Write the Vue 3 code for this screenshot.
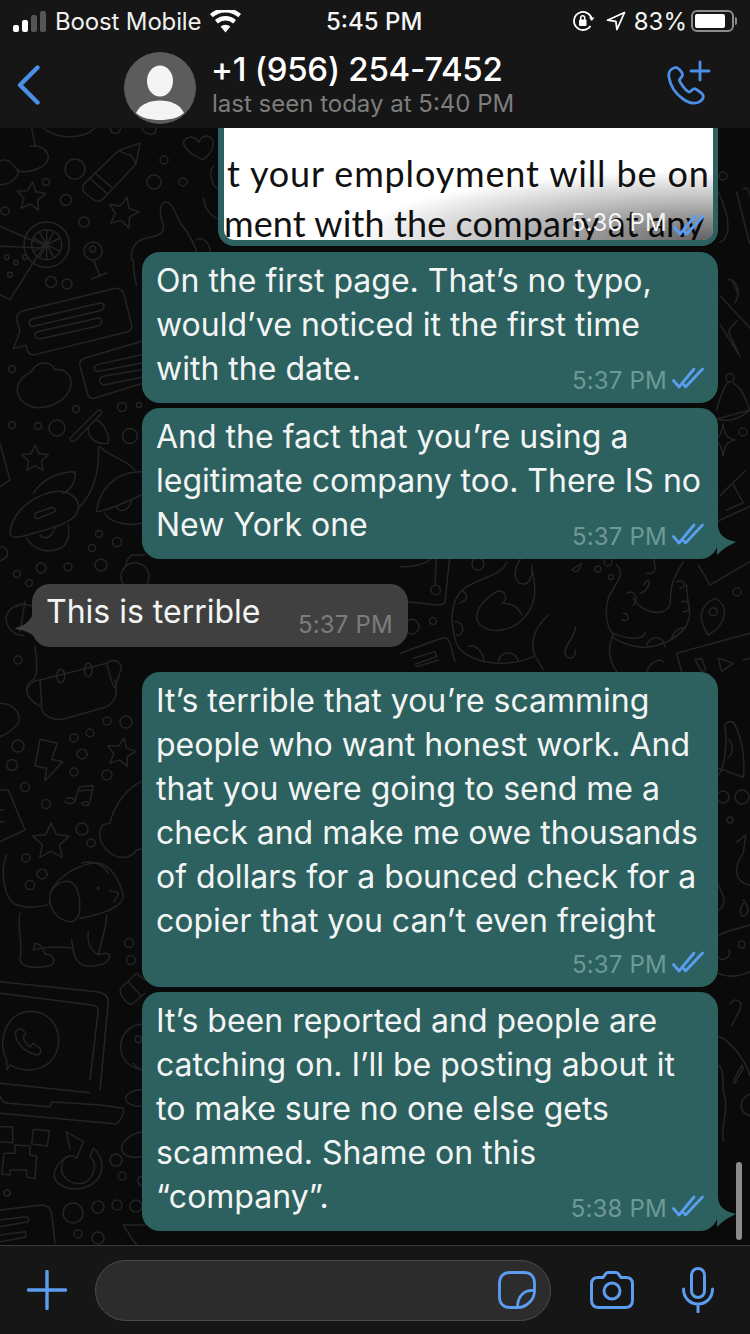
<template>
  <div class="phone">
    <header class="top">
      <div class="status">
        <div class="status-left">
          <div class="signal">
            <i class="on h1"></i><i class="on h2"></i><i class="h3"></i><i class="h4"></i>
          </div>
          <span class="carrier">Boost Mobile</span>
          <svg class="wifi" width="31" height="23" viewBox="0 0 31 23">
            <path d="M15.5 22.5 10.6 16.6a7.6 7.6 0 0 1 9.8 0ZM7.8 13.4 5 10a16 16 0 0 1 21 0l-2.8 3.4a11.6 11.6 0 0 0-15.4 0ZM2.7 7.3 0 4a23.4 23.4 0 0 1 31 0l-2.7 3.3a19.4 19.4 0 0 0-25.6 0Z" fill="#fff"/>
          </svg>
        </div>
        <span class="clock">5:45 PM</span>
        <div class="status-right">
          <svg width="24" height="24" viewBox="0 0 24 24" fill="none" stroke="#fff" stroke-width="1.8">
            <path d="M19.5 17A9 9 0 1 1 20.8 10"/>
            <path d="M18 8.5h5.500L20.800 12Z" fill="#fff" stroke="none"/>
            <rect x="8" y="10.500" width="7.500" height="6.500" rx="1" fill="#fff" stroke="none"/>
            <path d="M9.700 11V8.700a2 2 0 0 1 4 0V11" stroke-width="1.500"/>
          </svg>
          <svg class="arrow" width="20" height="20" viewBox="0 0 20 20" fill="none" stroke="#fff" stroke-width="1.800" stroke-linejoin="round">
            <path d="M18.500 1.500 1.500 9.200 9.800 10.300 11 18.500Z"/>
          </svg>
          <span class="percent">83%</span>
          <div class="battery"><div class="level"></div></div>
          <div class="nub"></div>
        </div>
      </div>
      <div class="nav">
        <svg class="back" width="24" height="40" viewBox="0 0 24 40" fill="none" stroke="#4b8fe6" stroke-width="4.400" stroke-linecap="round" stroke-linejoin="round">
          <path d="M20.500 2.500 3 20l17.500 17.500"/>
        </svg>
        <svg class="avatar" width="72" height="72" viewBox="0 0 72 72">
          <defs>
            <clipPath id="av"><circle cx="36" cy="36" r="36"/></clipPath>
          </defs>
          <g clip-path="url(#av)">
            <rect width="72" height="72" fill="#5c5c5c"/>
            <ellipse cx="36" cy="29" rx="13" ry="15.500" fill="#f4f4f4"/>
            <path d="M12 61C16 52 26 48.500 36 48.500S56 52 60 61C54 66 46 68 36 68S18 66 12 61Z" fill="#f4f4f4"/>
          </g>
        </svg>
        <div class="who">
          <div class="name">+1 (956) 254-7452</div>
          <div class="seen">last seen today at 5:40 PM</div>
        </div>
        <svg class="call" width="46" height="46" viewBox="0 0 46 46" fill="none" stroke="#4b8fe6" stroke-width="2.800" stroke-linecap="round" stroke-linejoin="round">
          <path d="M9 7.500C5 8.500 2 12 3 17.500 4.500 26 10 34 17 39c5 3.500 11 5 15 3.500 4-1.500 6-5 5-7.500-.5-1.200-6-5.500-8-6.200-2-.6-4 2.800-5.500 3.200C21 32.500 13.500 22.500 13.500 20c0-1.500 3.200-3 3-5.500C16 11.500 12 7 9 7.500Z"/>
          <path d="M34 2v18M25 11h18"/>
        </svg>
      </div>
    </header>

    <main class="chat">
      <svg class="doodles" viewBox="0 128 750 1117" fill="none" stroke="#242424" stroke-width="1.500" stroke-linecap="round" stroke-linejoin="round">
        <circle v-for="c in circles" :key="c.join()" :cx="c[0]" :cy="c[1]" :r="c[2]"/>
        <polygon v-for="s in stars" :key="s" :points="s"/>
        <path d="M723 424C725 436 727 438 735 440 727 442 725 444 723 456 721 444 719 442 711 440 719 438 721 436 723 424Z"/>

        <g transform="translate(0 128) scale(.3333)" stroke-width="4.500">
          <path d="M0 100C30 85 45 120 55 130 90 135 140 120 145 90 145 65 120 50 90 55M0 170C30 170 55 150 55 125M95 0 105 50"/>
          <path d="M420 45 355 68 250 170Q245 185 255 195L285 218Q297 224 310 212L408 108ZM355 68C372 72 385 85 392 80 400 95 405 100 408 108M268 150 320 195M285 135 335 178"/>
          <path d="M610 95C570 80 540 50 555 35 570 20 590 30 597 42 605 20 635 15 640 45 640 65 625 85 610 95Z"/>
          <circle cx="140" cy="350" r="68"/>
          <circle cx="140" cy="350" r="45"/>
          <path d="M140 305V395M100 330 180 370M100 370 180 330M118 312 162 388M162 312 118 388"/>
          <path d="M0 295 133 352 30 515 0 500M0 355 133 360"/>
          <circle cx="20" cy="388" r="7"/><circle cx="48" cy="403" r="7"/><circle cx="75" cy="388" r="7"/><circle cx="30" cy="440" r="7"/>
          <path d="M280 395 300 445M275 453 320 435"/>
          <circle cx="278" cy="363" r="9"/>
          <path d="M65 550 340 482Q365 476 372 500L395 590Q398 608 380 612L105 680Q88 682 82 668L78 652 40 662 60 610 50 575Q48 556 65 550Z"/>
          <path d="M100 572 300 525Q312 525 312 535 312 545 300 548L100 595Q88 597 88 583 88 575 100 572ZM118 610 295 570Q306 572 305 583 303 592 293 594L118 633Q104 632 105 620 106 612 118 610Z"/>
          <path d="M425 640 255 690Q235 697 240 715L262 795Q268 815 285 810L430 765M425 680 292 710Q280 715 283 725 287 732 297 730L425 705M425 725 310 745Q297 750 300 762 305 772 315 770L425 748"/>
          <path d="M95 730C110 700 150 695 165 725 195 720 218 745 212 775 205 805 175 830 130 838 90 845 55 820 52 790 50 760 70 745 95 730Z"/>
          <path d="M395 395C390 360 410 335 440 330 470 325 495 320 490 290 475 250 480 225 498 222 520 225 525 260 545 290 565 315 580 340 590 370M590 335C610 325 630 345 630 372M400 395C400 420 400 440 410 470"/>
          <path d="M130 0C170 35 250 35 285 0M330 0C335 20 355 25 362 0M425 0C435 20 470 30 468 0M640 115C625 130 635 170 650 180M610 210C615 245 635 265 650 272"/>
        </g>

        <g transform="translate(0 400) scale(.3333)" stroke-width="4.500">
          <path d="M30 400C35 340 90 290 160 275 200 270 240 290 235 325 230 370 150 385 100 400 70 410 35 420 30 400Z"/>
          <path d="M100 280C125 240 170 215 225 215 230 245 210 270 190 280M105 340 155 322Q168 325 165 335L112 356Q100 355 105 340Z"/>
          <path d="M80 415C100 450 150 465 190 440 205 425 210 395 205 375M120 405C130 420 155 415 165 385"/>
          <path d="M290 335C295 275 340 215 425 215M292 335C330 330 380 305 425 285M315 340C325 365 380 380 425 370M350 320C355 335 385 340 395 300"/>
          <path d="M235 325C270 290 300 230 295 140M300 140C330 170 380 180 405 210M210 115 295 30Q305 28 305 40L225 122Q212 128 210 115ZM265 80C260 110 285 135 325 130 330 110 310 60 285 60"/>
          <path d="M0 130 30 240 0 260M0 440C25 440 35 470 0 482"/>
          <path d="M395 465C370 485 385 495 370 510M435 465H395"/>
          <circle cx="405" cy="530" r="42"/>
          <path d="M100 620C60 600 25 625 18 650 15 680 45 710 70 705M75 605 60 695M50 620 65 610"/>
          <path d="M105 740C110 780 115 820 100 840 85 845 80 860 80 870M120 840 320 790C335 775 355 780 365 800L345 865M320 790C325 810 335 850 345 865"/>
          <ellipse cx="182" cy="828" rx="12" ry="20"/><ellipse cx="265" cy="810" rx="12" ry="20"/>
        </g>

        <g transform="translate(0 680) scale(.3333)" stroke-width="4.500">
          <path d="M80 30C85 10 110 0 115 0M80 30C80 55 110 75 125 80 125 110 165 125 200 115L320 80C345 70 355 40 345 0M120 0 125 75"/>
          <path d="M0 70C40 70 65 100 55 130 40 150 15 165 0 170"/>
          <path d="M120 178 105 258 140 265 135 302 188 245 155 238 172 190Z"/>
          <path d="M200 355Q220 348 225 365 210 378 195 365M225 362 238 320 280 317 270 365M238 332 278 330M245 370Q262 360 268 372 255 382 245 372Z"/>
          <path d="M0 330H25L75 450 0 485M0 390H12M0 425H12"/>
          <path d="M435 300C380 320 340 380 330 430 290 430 290 480 320 510 350 540 390 540 410 510L435 505"/>
          <path d="M20 525C0 570 10 640 40 670 80 690 130 680 150 670M150 640C170 590 240 550 290 548 330 550 360 600 370 650 365 680 320 700 240 715"/>
          <path d="M150 640C145 680 165 720 210 725 245 725 245 670 230 625 215 595 175 595 150 640ZM245 550C270 540 310 550 325 580M330 630C335 640 355 630 355 640 355 650 345 660 340 665"/>
          <circle cx="295" cy="625" r="3"/>
          <path d="M60 700C50 740 70 790 60 840 65 860 100 865 130 860 165 860 170 840 150 825L135 822C125 790 110 790 105 790L100 810C130 800 200 800 215 805M215 780C220 810 220 835 240 850 260 865 320 860 330 830 325 815 305 820 295 825 270 810 260 790 265 755M320 705C320 740 305 780 295 822"/>
          <path d="M0 905 290 935Q325 940 325 965L300 1230M0 940 275 975Q295 980 295 990L270 1200"/>
          <path d="M20 1140C-10 1080 20 1000 88 994 150 994 176 1040 176 1082 176 1130 140 1170 88 1170 65 1170 45 1165 30 1155L20 1170Z"/>
          <path d="M50 1050C40 1060 50 1110 110 1125 120 1125 125 1115 120 1105L100 1090 90 1100C80 1095 70 1080 70 1070L78 1060 65 1048Q55 1045 50 1050Z"/>
          <path d="M362 925 410 880 435 900M362 925C355 945 385 980 400 970L435 940M385 905 425 950"/>
          <circle cx="430" cy="1100" r="68"/>
          <circle cx="415" cy="1078" r="10"/>
          <path d="M400 1150Q420 1175 435 1170"/>
        </g>

        <g transform="translate(0 1000) scale(.3333)" stroke-width="4.500">
          <path d="M0 250 270 278M0 288 5 300Q10 308 25 310L150 320 155 305 300 315 370 325Q375 345 350 372L0 340"/>
          <path d="M0 380H38V428L0 425M100 388 148 392 142 438 95 432ZM12 460H45V435L90 438V465L110 468 105 535 80 532V510H30V525L5 522Z"/>
          <path d="M205 470C165 490 150 530 175 550 215 580 290 570 305 510 310 480 295 455 280 445L270 470C290 485 290 530 250 550 210 555 170 530 190 480 195 470 215 460 230 475L250 425 198 395 210 445"/>
          <path d="M0 630 125 615Q150 615 155 640L165 730M0 660 80 650Q90 655 85 665L0 680M0 705 75 695Q80 700 75 712L0 725"/>
          <path d="M430 270C400 265 370 285 380 305 395 320 420 320 432 318M430 395C380 400 355 440 370 460 390 480 420 470 430 470M430 530C410 525 405 550 430 560M370 675H435M370 675C385 700 400 725 410 735"/>
        </g>

        <g transform="translate(400 555) scale(.3333)" stroke-width="4.500">
          <path d="M0 35C50 35 90 25 100 0M110 0 105 90M150 0 135 140Q130 150 115 150L20 140M0 295 125 250Q145 245 150 265L165 320M40 310 105 290 110 305 45 328M50 335 115 315"/>
          <circle cx="107" cy="105" r="14"/>
          <circle cx="35" cy="215" r="22"/>
          <path d="M320 20C310 60 250 65 200 95 150 130 150 190 165 250 170 290 220 320 290 325 340 325 380 315 400 305"/>
          <path d="M190 110C205 120 205 135 178 145M165 200C195 200 195 245 170 240M205 275C230 265 255 300 250 320M295 320C300 285 350 285 355 320"/>
          <path d="M395 40C410 100 410 150 370 190 340 225 280 240 240 210 215 180 240 140 290 110 320 100 325 140 305 145 320 145 350 145 365 180M370 0C345 30 335 70 360 85 390 95 400 60 395 30"/>
          <path d="M445 180C405 215 380 270 415 320L430 345M527 215C520 260 490 270 495 295 500 315 530 315 525 285M515 45 545 25Q535 60 515 45Z"/>
          <path d="M650 30C680 60 640 90 625 130 605 200 640 240 640 240 620 280 630 320 650 350M740 55C780 60 760 20 760 0M700 130C720 170 790 190 810 150 815 120 800 100 850 20"/>
          <path d="M860 90C860 150 880 170 860 210 830 260 750 290 690 270 660 260 630 250 640 235 700 260 740 250 735 230M730 90C760 50 750 110 720 115M680 115C700 100 720 130 700 150M670 175C690 175 690 205 665 195M740 270C750 240 790 240 795 275M815 250C830 210 860 220 855 220M830 80C860 70 860 100 840 100M845 140C875 130 875 175 850 170"/>
          <path d="M945 130C900 150 890 190 925 240 980 210 990 150 945 130Z"/>
          <circle cx="940" cy="170" r="12"/>
          <path d="M895 30 930 90 1050 20M830 295 1050 235M830 295 845 350M885 315 905 350 918 345 905 310ZM955 310 1000 325 965 350ZM1030 315 1050 310M740 350C750 320 780 310 790 320"/>
        </g>

        <g transform="translate(700 128) scale(.3333 .357)" stroke-width="4.500">
          <path d="M55 180C100 270 85 310 60 320M110 180 145 310Q150 335 175 340M130 170C150 160 150 200 160 215"/>
          <path d="M85 425C100 420 130 450 105 490M60 470 150 560M60 550 120 640 85 570 110 540M95 425 115 465"/>
          <path d="M50 790C70 720 85 710 90 712M100 715C130 730 140 770 150 790L50 815Q100 830 150 790"/>
          <circle cx="90" cy="700" r="12"/>
          <path d="M60 1030 135 960M100 1000 130 1050 80 1070M10 1120 150 1060"/>
        </g>

        <g transform="translate(690 680) scale(.3333 .36)" stroke-width="4.500">
          <path d="M85 265C110 230 110 160 105 130 100 115 130 110 135 125 160 170 165 230 160 270L85 245M115 165C130 175 130 205 115 215"/>
          <path d="M140 450C175 430 170 410 160 480 130 520 130 560 180 570M160 620C145 640 150 660 165 655 180 640 175 630 160 610"/>
          <path d="M85 710C120 690 160 690 180 680M85 815C120 830 160 820 180 810M85 770C100 790 130 760 115 750M85 570C100 600 115 620 85 640"/>
          <circle cx="155" cy="735" r="10"/>
          <path d="M120 900C135 880 160 890 150 915L125 960M130 1115 155 1070 160 1078 135 1120ZM85 990C120 1000 170 1060 180 1100M85 1070C110 1090 90 1130 105 1160 115 1200 90 1250 100 1280M180 1150C150 1160 140 1200 180 1210"/>
        </g>
      </svg>

      <div class="scrollbar"></div>

      <div class="messages">
        <div class="photo-bubble">
          <div class="photo">
            <div class="photo-line first">t your employment will be on</div>
            <div class="photo-line second">ment with the company at any t</div>
            <div class="shade"></div>
            <span class="time light">5:36 PM</span>
            <svg class="ticks" width="32" height="22" viewBox="0 0 32 22" fill="none" stroke="#5b9df0" stroke-width="2.800" stroke-linecap="round" stroke-linejoin="round">
              <path d="M1.500 13.500 7 20 22 2M12 18l1.500 2L30.500 2"/>
            </svg>
          </div>
        </div>

        <div v-for="m in messages" :key="m.id" class="bubble" :class="[m.side, { wide: m.extra }]">
          <div v-for="line in m.lines" :key="line" class="line">{{ line }}</div>
          <span class="time">{{ m.time }}</span>
          <svg v-if="m.side === 'out'" class="ticks" width="32" height="22" viewBox="0 0 32 22" fill="none" stroke="#5b9df0" stroke-width="2.800" stroke-linecap="round" stroke-linejoin="round">
            <path d="M1.500 13.500 7 20 22 2M12 18l1.500 2L30.500 2"/>
          </svg>
          <svg v-if="m.tail && m.side === 'out'" class="tail-out" width="20" height="32" viewBox="0 0 20 32">
            <path d="M0 0H1C1.500 9 6 14 18 16.500 19 17 18.500 17.500 18 17.500 12 20 6 24 1 29L0 30Z" fill="#2c615f"/>
          </svg>
          <svg v-if="m.tail && m.side === 'in'" class="tail-in" width="20" height="30" viewBox="0 0 20 30">
            <path d="M20 0H19C18.500 8 12 16 2 18.500 0 19 0 20 2 20.500 8 20.500 14 23 20 28Z" fill="#404040"/>
          </svg>
        </div>
      </div>
    </main>

    <footer class="bottom">
      <svg class="plus" width="40" height="40" viewBox="0 0 40 40" stroke="#5b9df0" stroke-width="3.400" stroke-linecap="round">
        <path d="M20 1.500v37M1.500 20h37"/>
      </svg>
      <div class="input">
        <svg width="38" height="38" viewBox="0 0 38 38" fill="none" stroke="#5b9df0" stroke-width="2.800" stroke-linejoin="round">
          <path d="M12 1.500H26C32.500 1.500 36.500 5.500 36.500 12V20C36.500 29 28 36.500 20 36.500H12C5.500 36.500 1.500 32.500 1.500 26V12C1.500 5.500 5.500 1.500 12 1.500Z"/>
          <path d="M36.500 19.500C27 18.500 19.500 24 19.500 36.500"/>
        </svg>
      </div>
      <svg class="camera" width="44" height="38" viewBox="0 0 44 38" fill="none" stroke="#5b9df0" stroke-width="3">
        <path d="M8 6.500H13L16 2.500Q16.500 1.500 18 1.500H26Q27.500 1.500 28 2.500L31 6.500H36Q42.500 6.500 42.500 13V29Q42.500 36.500 35 36.500H9Q1.500 36.500 1.500 29V13Q1.500 6.500 8 6.500Z"/>
        <circle cx="22" cy="20" r="8"/>
      </svg>
      <svg class="mic" width="32" height="46" viewBox="0 0 32 46" fill="none" stroke="#5b9df0" stroke-width="3" stroke-linecap="round">
        <rect x="9.500" y="1.500" width="13" height="29" rx="6.500"/>
        <path d="M1.500 22C1.500 31 8 37 16 37S30.500 31 30.500 22M16 37V45"/>
      </svg>
    </footer>
  </div>
</template>

<script setup>
const messages = [
  {
    id: 1,
    side: 'out',
    time: '5:37 PM',
    lines: ['On the first page. That’s no typo,', 'would’ve noticed it the first time', 'with the date.'],
  },
  {
    id: 2,
    side: 'out',
    time: '5:37 PM',
    tail: true,
    lines: ['And the fact that you’re using a', 'legitimate company too. There IS no', 'New York one'],
  },
  {
    id: 3,
    side: 'in',
    time: '5:37 PM',
    tail: true,
    lines: ['This is terrible'],
  },
  {
    id: 4,
    side: 'out',
    time: '5:37 PM',
    extra: true,
    lines: [
      'It’s terrible that you’re scamming',
      'people who want honest work. And',
      'that you were going to send me a',
      'check and make me owe thousands',
      'of dollars for a bounced check for a',
      'copier that you can’t even freight',
    ],
  },
  {
    id: 5,
    side: 'out',
    time: '5:38 PM',
    tail: true,
    lines: [
      'It’s been reported and people are',
      'catching on. I’ll be posting about it',
      'to make sure no one else gets',
      'scammed. Shame on this',
      '“company”.',
    ],
  },
];

const circles = [
  [75, 169, 10], [46, 182, 3.5], [66, 200, 5.5], [5, 211, 4], [84, 222, 5], [164, 160, 4], [154, 182, 7], [183, 182, 4],
  [93, 251, 9], [51, 282, 5.5], [67, 284, 5], [12, 369, 3.5], [76, 409, 3.5], [122, 407, 4.5], [139, 405, 2.5],
  [12, 425, 3.5], [38, 426, 3.5], [57, 428, 8], [130, 436, 7.5], [99, 534, 3.5], [117, 542, 4.5], [92, 548, 3.5],
  [101, 565, 6], [68, 567, 4], [41, 568, 5], [17, 574, 3.5], [29, 583, 3.5], [18, 660, 4],
  [107, 721, 4], [126, 722, 6], [74, 738, 4], [90, 733, 4], [18, 746, 6], [12, 765, 5.5], [82, 754, 5], [74, 772, 4],
  [107, 775, 5], [25, 787, 4.5], [46, 804, 4.5], [82, 829, 6], [91, 843, 4], [26, 858, 4], [42, 874, 5], [30, 885, 4.5],
  [129, 943, 4.5], [131, 960, 4.5], [116, 1160, 6], [122, 1176, 4], [7, 1193, 3], [73, 1213, 10], [98, 1207, 6],
  [117, 1205, 5], [136, 1206, 6], [78, 1234, 4], [98, 1238, 6],
  [433, 621, 3.5], [478, 564, 6], [598, 569, 3], [608, 562, 4], [611, 577, 2.5], [737, 592, 4],
  [723, 176, 4], [743, 432, 4], [723, 797, 6], [742, 797, 7], [730, 820, 3],
];

function star(cx, cy, r, turn) {
  const pts = [];
  for (let i = 0; i < 10; i++) {
    const rad = i % 2 ? r * 0.48 : r;
    const a = (i * Math.PI) / 5 - Math.PI / 2 + turn;
    pts.push((cx + rad * Math.cos(a)).toFixed(1) + ',' + (cy + rad * Math.sin(a)).toFixed(1));
  }
  return pts.join(' ');
}

const stars = [
  star(31, 197, 15, 0.1),
  star(123, 213, 16, 0.25),
  star(35, 459, 14, 0),
  star(121, 753, 15, 0.2),
  star(51, 842, 19, 0),
];
</script>

<style>
html,
body {
  margin: 0;
  background: #0a0a0a;
}
</style>

<style scoped>
.phone {
  width: 750px;
  height: 1334px;
  display: flex;
  flex-direction: column;
  overflow: hidden;
  font-family: Inter, "Liberation Sans", sans-serif;
  color: #f3f5f5;
}

.top {
  height: 128px;
  background: #161616;
  flex: none;
}
.status {
  height: 42px;
  display: flex;
  align-items: center;
  justify-content: space-between;
  padding: 0 13px;
  position: relative;
  font-size: 24px;
}
.status-left,
.status-right {
  display: flex;
  align-items: center;
}
.signal {
  display: flex;
  align-items: flex-end;
  gap: 3px;
  width: 33px;
  height: 21px;
}
.signal i {
  width: 6px;
  border-radius: 2px;
  background: #555;
}
.signal .on {
  background: #fff;
}
.h1 { height: 7px; }
.h2 { height: 12px; }
.h3 { height: 17px; }
.h4 { height: 21px; }
.carrier {
  margin-left: 9px;
  color: #f0f0f0;
  letter-spacing: -0.15px;
}
.wifi {
  margin-left: 9px;
}
.clock {
  position: absolute;
  left: 326px;
  font-weight: 500;
}
.arrow {
  margin-left: 11px;
}
.percent {
  margin-left: 8px;
}
.battery {
  width: 43px;
  height: 22px;
  margin-left: 4px;
  border: 2px solid #8c8c8c;
  border-radius: 6px;
  box-sizing: border-box;
  padding: 2px;
}
.level {
  width: 30px;
  height: 100%;
  background: #fff;
  border-radius: 2px;
}
.nub {
  width: 2px;
  height: 8px;
  margin-left: 1px;
  background: #8c8c8c;
  border-radius: 0 2px 2px 0;
}

.nav {
  height: 86px;
  display: flex;
  align-items: center;
  padding-left: 17px;
  padding-right: 38px;
}
.avatar {
  margin-left: 83px;
  margin-top: 5px;
  flex: none;
}
.who {
  margin-left: 15px;
  flex: 1;
}
.name {
  font-size: 33px;
  font-weight: 500;
  line-height: 38px;
  letter-spacing: -0.25px;
  color: #fff;
  white-space: nowrap;
}
.seen {
  font-size: 24px;
  line-height: 32px;
  margin-left: 1px;
  color: #7d7d7d;
  white-space: nowrap;
}
.call {
  margin-top: -4px;
}

.chat {
  flex: 1;
  position: relative;
  background: #0a0a0a;
  overflow: hidden;
}
.doodles {
  position: absolute;
  inset: 0;
  width: 100%;
  height: 100%;
}
.scrollbar {
  position: absolute;
  left: 736px;
  top: 1034px;
  width: 6px;
  height: 78px;
  border-radius: 3px;
  background: #8c8c8c;
}
.messages {
  position: relative;
  display: flex;
  flex-direction: column;
  align-items: flex-start;
  padding-left: 142px;
}

.photo-bubble {
  width: 500px;
  margin-left: 76px;
  height: 118px;
  box-sizing: border-box;
  padding: 0 5px 6px 6px;
  background: #2c615f;
  border-radius: 0 0 16px 16px;
}
.photo {
  position: relative;
  height: 112px;
  background: #fff;
  overflow: hidden;
  border-radius: 0 0 10px 10px;
  color: #111;
  font-family: Lato, "Open Sans", sans-serif;
  font-size: 36px;
  white-space: nowrap;
}
.photo-line {
  position: absolute;
  line-height: 48px;
}
.first {
  left: 3px;
  top: 21px;
  letter-spacing: 0.85px;
}
.second {
  left: 0;
  top: 71px;
  letter-spacing: 0.1px;
}
.shade {
  position: absolute;
  inset: 0;
  background: radial-gradient(ellipse 360px 70px at 100% 100%, rgba(0, 0, 0, 0.62), rgba(0, 0, 0, 0) 100%);
}

.bubble {
  position: relative;
  width: 576px;
  box-sizing: border-box;
  padding: 7px 14px 12px;
  margin-top: 5px;
  background: #2c615f;
  border-radius: 18px;
  font-size: 32px;
  line-height: 44px;
  white-space: nowrap;
}
.photo-bubble + .bubble {
  margin-top: 6px;
}
.bubble.wide {
  padding-bottom: 44px;
}
.bubble.in {
  width: 376px;
  margin: 25px 0 20px -110px;
  padding: 6px 14px 13px;
  background: #404040;
}
.time {
  position: absolute;
  right: 51px;
  bottom: 9px;
  font-size: 24px;
  line-height: 26px;
  letter-spacing: 0.2px;
  color: #6d9a96;
}
.in .time {
  right: 15px;
  color: #7c7c7c;
}
.time.light {
  right: 46px;
  bottom: 4px;
  color: #f4f4f4;
  font-family: Inter, "Liberation Sans", sans-serif;
}
.ticks {
  position: absolute;
  right: 14px;
  bottom: 14px;
}
.photo .ticks {
  right: 8px;
  bottom: 4px;
}
.tail-out {
  position: absolute;
  left: 575px;
  bottom: 2px;
}
.tail-in {
  position: absolute;
  left: -17px;
  bottom: 8px;
}

.bottom {
  height: 89px;
  flex: none;
  box-sizing: border-box;
  border-top: 1px solid #3a3a3a;
  background: #161616;
  display: flex;
  align-items: center;
  padding: 0 0 0 27px;
}
.plus {
  flex: none;
}
.input {
  width: 456px;
  height: 61px;
  box-sizing: border-box;
  margin-left: 28px;
  border: 1px solid #4c4c4c;
  border-radius: 31px;
  background: #2c2c2c;
  display: flex;
  align-items: center;
  justify-content: flex-end;
  padding-right: 14px;
}
.camera {
  margin-left: 39px;
  flex: none;
}
.mic {
  margin-left: 48px;
  flex: none;
}
</style>
